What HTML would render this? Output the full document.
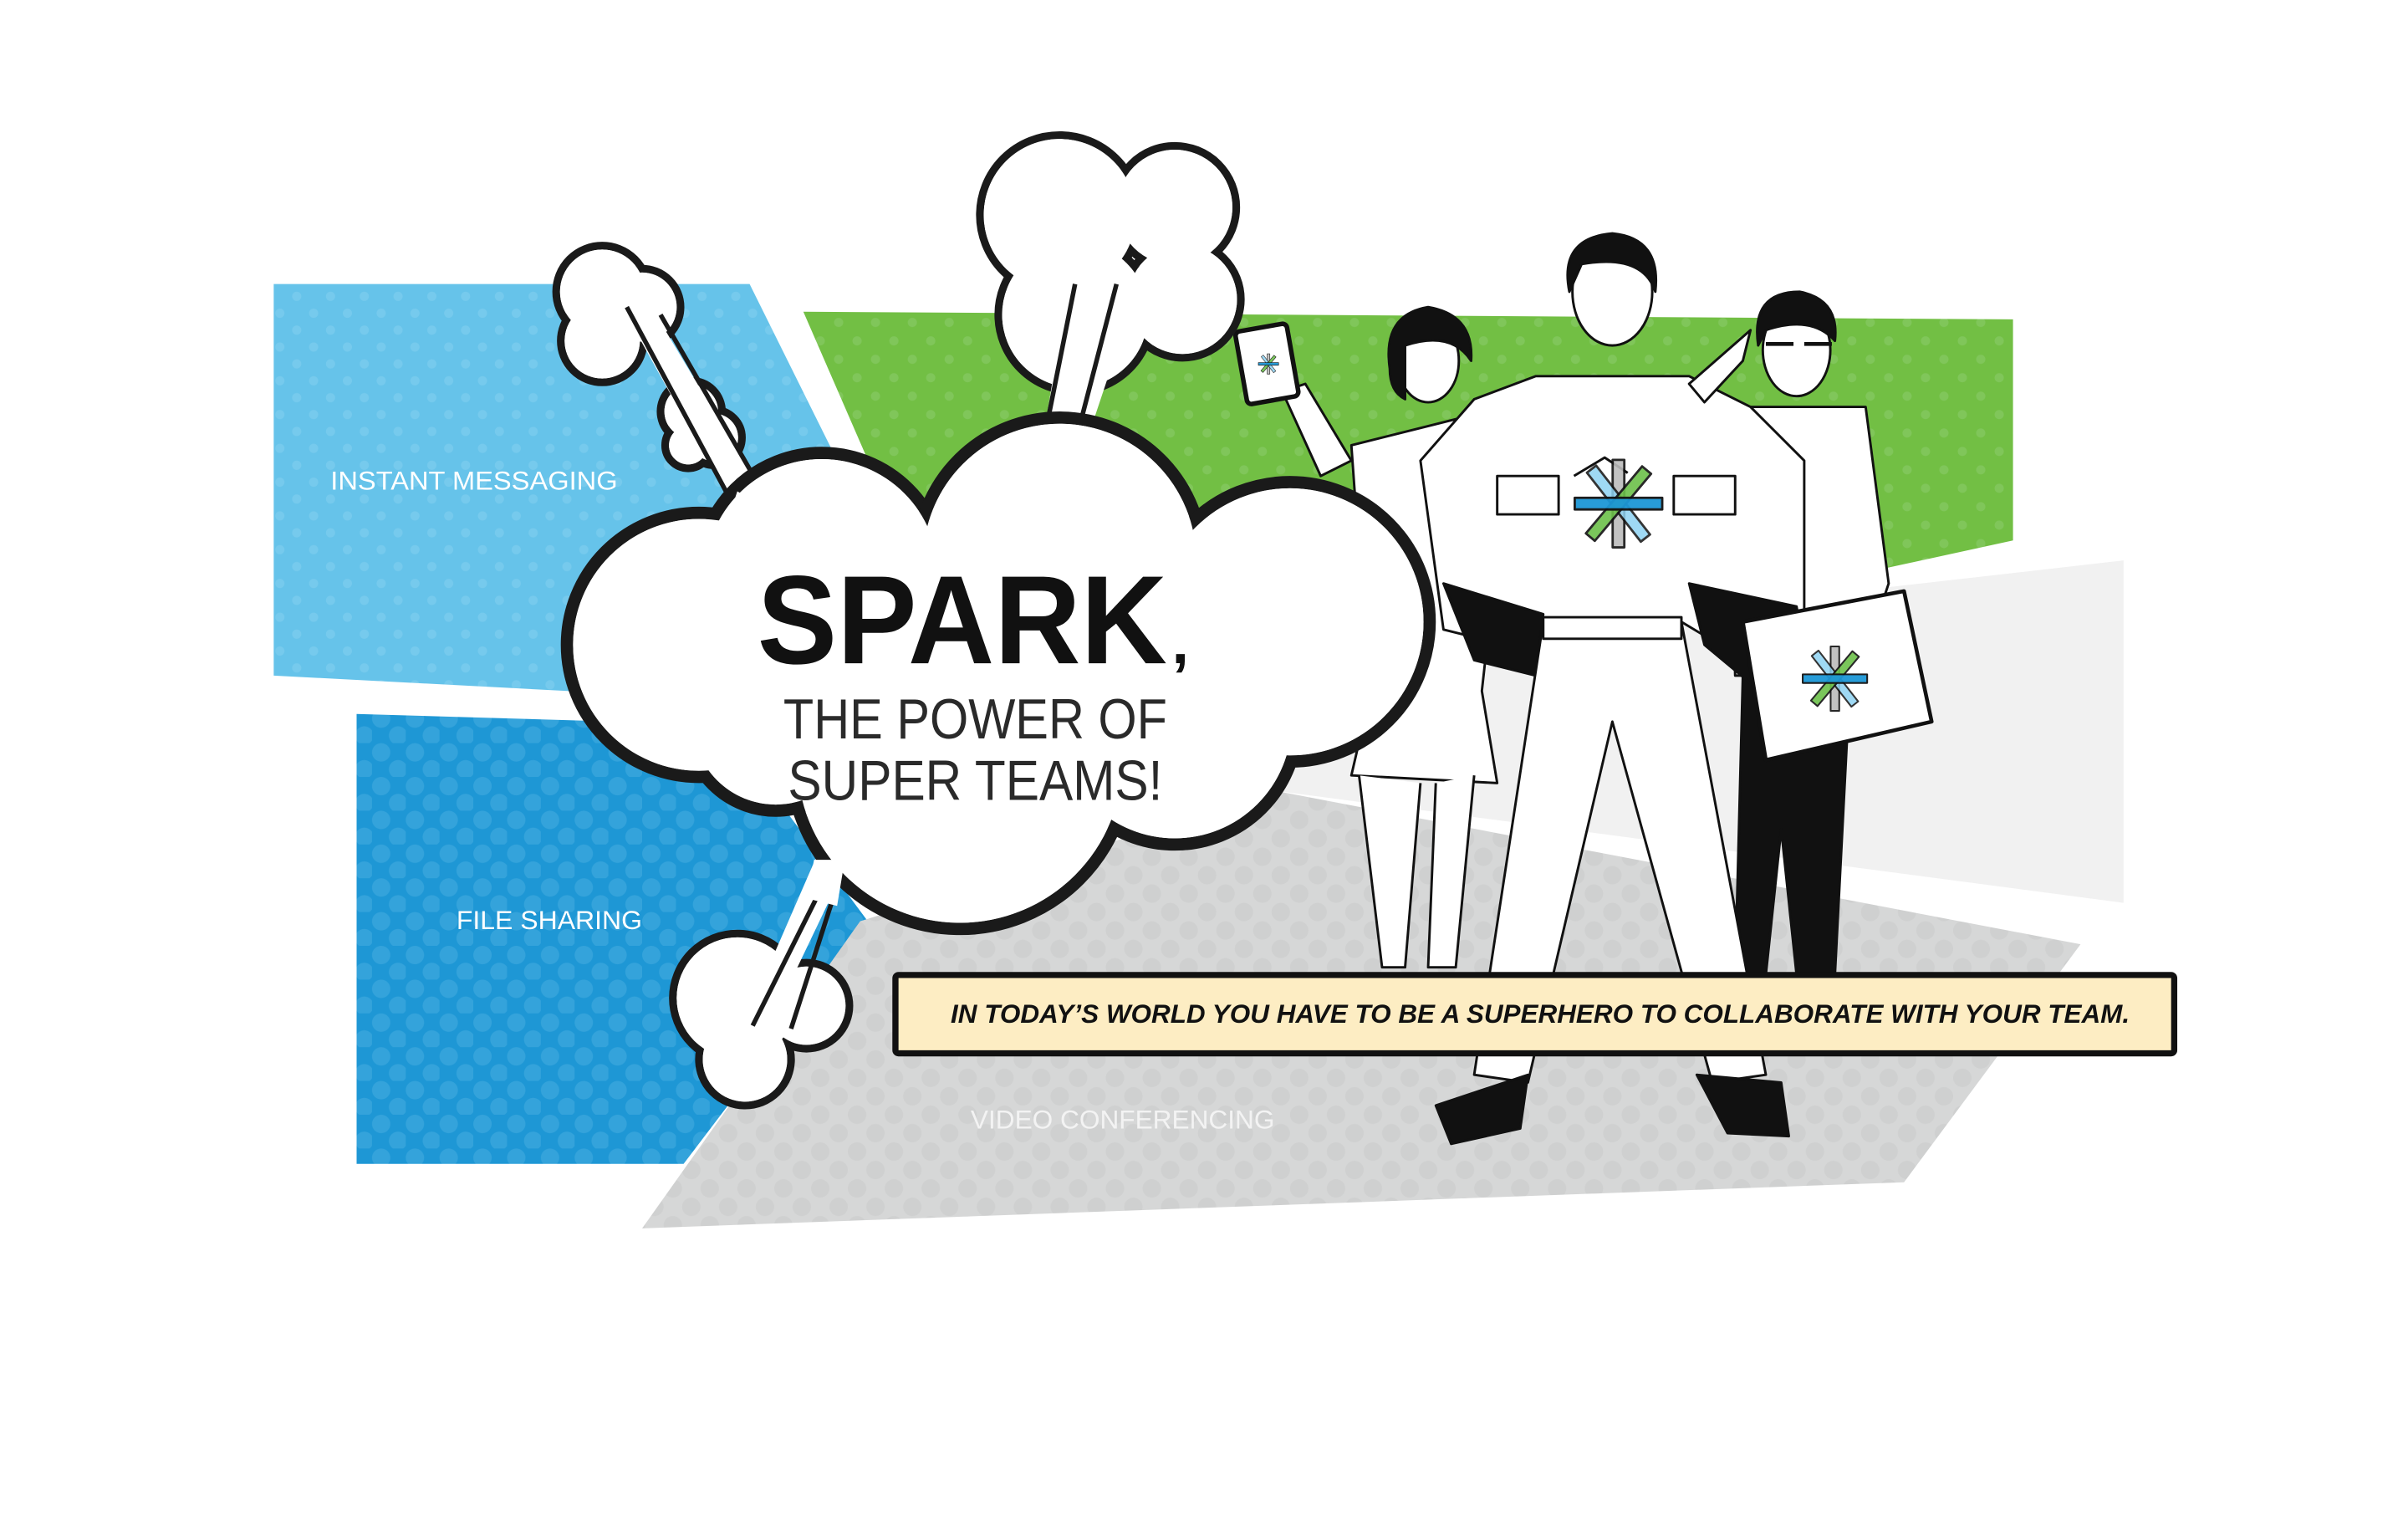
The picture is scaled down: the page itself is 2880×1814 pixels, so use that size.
<!DOCTYPE html>
<html><head><meta charset="utf-8"><style>
html,body{margin:0;padding:0;background:#fff;width:2880px;height:1814px;overflow:hidden}
svg{display:block}
text{font-family:"Liberation Sans",sans-serif}
</style></head><body>
<svg width="2880" height="1814" viewBox="0 0 1568 988" xmlns="http://www.w3.org/2000/svg">
<defs>
<pattern id="pLB" width="22" height="22" patternUnits="userSpaceOnUse"><rect width="22" height="22" fill="#66c3ea"/><circle cx="6" cy="6" r="3" fill="#76caed"/><circle cx="17" cy="17" r="3" fill="#76caed"/></pattern>
<pattern id="pDB" width="22" height="22" patternUnits="userSpaceOnUse"><rect width="22" height="22" fill="#1e97d5"/><circle cx="6" cy="6" r="6" fill="#34a3db"/><circle cx="17" cy="17" r="6" fill="#34a3db"/></pattern>
<pattern id="pG" width="24" height="24" patternUnits="userSpaceOnUse"><rect width="24" height="24" fill="#72bf44"/><circle cx="6" cy="6" r="3" fill="#80c65a"/><circle cx="18" cy="18" r="3" fill="#80c65a"/></pattern>
<pattern id="pGr" width="24" height="24" patternUnits="userSpaceOnUse"><rect width="24" height="24" fill="#d6d7d7"/><circle cx="6" cy="6" r="6" fill="#cfd0d0"/><circle cx="18" cy="18" r="6" fill="#cfd0d0"/></pattern>
<g id="logo">
<rect x="-4" y="-30" width="8" height="60" fill="#bcbcbc" opacity=".9"/>
<rect x="-4" y="-30" width="8" height="60" fill="#8fd3f3" transform="rotate(-38)" opacity=".85"/>
<rect x="-4" y="-30" width="8" height="60" fill="#6cc04a" transform="rotate(40)" opacity=".9"/>
<rect x="-30" y="-4" width="60" height="8" fill="#1d97d6" opacity=".95"/>
</g>
</defs>

<polygon points="178,185 488,185 565,340 560,460 178,440" fill="url(#pLB)"/>
<polygon points="232,465 470,472 565,600 445,758 232,758" fill="url(#pDB)"/>
<polygon points="523,203 1311,208 1311,352 1090,400 600,380" fill="url(#pG)"/>
<polygon points="900,420 1383,365 1383,588 830,515" fill="#f1f1f1"/>
<polygon points="830,515 1355,615 1240,770 418,800 560,600" fill="url(#pGr)"/>

<text x="215" y="319" fill="#fff" font-size="17" textLength="187" lengthAdjust="spacingAndGlyphs">INSTANT MESSAGING</text>
<text x="297" y="605" fill="#fff" font-size="17" textLength="121" lengthAdjust="spacingAndGlyphs">FILE SHARING</text>
<text x="632" y="735" fill="#f3f3f3" font-size="17" textLength="198" lengthAdjust="spacingAndGlyphs">VIDEO CONFERENCING</text>

<g stroke="#111" stroke-width="1.6" stroke-linejoin="round">
<path d="M835,255 L860,310 L880,300 L850,250 Z" fill="#fff"/>
<rect x="808" y="213" width="34" height="48" rx="3" fill="#fff" stroke-width="3" transform="rotate(-10 825 237)"/>
<use href="#logo" transform="translate(826,237) scale(.22)"/>
<path d="M880,290 L960,270 L975,360 L965,450 L975,510 L880,505 L895,440 L885,360 Z" fill="#fff"/>
<path d="M885,505 L900,630 L915,630 L925,510 M935,510 L930,630 L948,630 L960,505" fill="#fff"/>
<ellipse cx="930" cy="235" rx="20" ry="27" fill="#fff"/>
<path d="M905,240 Q900,205 930,200 Q960,205 958,235 Q945,215 915,225 L915,260 Q905,255 905,240 Z" fill="#111"/>
<path d="M1125,265 L1215,265 L1230,380 L1210,440 L1130,440 Z" fill="#fff"/>
<path d="M1135,440 L1205,440 L1195,635 L1170,635 L1160,540 L1150,635 L1130,635 Z" fill="#111"/>
<ellipse cx="1170" cy="228" rx="22" ry="30" fill="#fff"/>
<path d="M1145,225 Q1140,190 1172,190 Q1198,195 1195,222 Q1180,205 1150,215 Z" fill="#111"/>
<path d="M1150,224 h18 M1175,224 h18" stroke-width="2.5"/>
<path d="M960,260 L1000,245 L1100,245 L1140,265 L1175,300 L1175,440 L1120,420 L1095,405 L1005,405 L980,420 L940,410 L925,300 Z" fill="#fff"/>
<path d="M940,380 L1005,400 L1000,440 L960,430 Z" fill="#111"/>
<path d="M1100,380 L1170,395 L1178,440 L1140,445 L1110,420 Z" fill="#111"/>
<path d="M1100,250 L1140,215 L1135,235 L1110,262 Z" fill="#fff"/>
<path d="M1005,405 L1095,405 L1150,700 L1115,705 L1050,470 L995,705 L960,700 Z" fill="#fff"/>
<rect x="1005" y="402" width="90" height="14" fill="#fff"/>
<path d="M935,720 L995,700 L990,735 L945,745 Z M1105,700 L1160,705 L1165,740 L1125,738 Z" fill="#111"/>
<ellipse cx="1050" cy="190" rx="26" ry="35" fill="#fff"/>
<path d="M1022,190 Q1015,155 1050,152 Q1082,155 1078,190 Q1070,165 1030,172 Z" fill="#111"/>
<path d="M1025,310 L1045,298 L1060,308 M975,310 h40 v25 h-40 Z M1090,310 h40 v25 h-40 Z" fill="#fff"/>
<use href="#logo" transform="translate(1054,328) scale(.95)"/>
<path d="M1135,405 L1240,385 L1258,470 L1150,495 Z" fill="#fff" stroke-width="2.5"/>
<use href="#logo" transform="translate(1195,442) scale(.7)"/>
</g>

<g stroke="#1a1a1a" stroke-width="5" fill="#fff">
<circle cx="392" cy="190" r="30"/><circle cx="418" cy="200" r="25"/><circle cx="392" cy="222" r="27"/>
<circle cx="450" cy="268" r="20"/><circle cx="465" cy="285" r="18"/><circle cx="448" cy="290" r="15"/>
<circle cx="690" cy="140" r="52"/><circle cx="765" cy="135" r="40"/><circle cx="770" cy="195" r="38"/><circle cx="700" cy="205" r="50"/>
<circle cx="480" cy="650" r="42"/><circle cx="525" cy="655" r="28"/><circle cx="485" cy="690" r="30"/>
</g>
<g fill="#fff">
<circle cx="392" cy="190" r="27.5"/><circle cx="418" cy="200" r="22.5"/><circle cx="392" cy="222" r="24.5"/>
<circle cx="450" cy="268" r="17.5"/><circle cx="465" cy="285" r="15.5"/><circle cx="448" cy="290" r="12.5"/>
<circle cx="690" cy="140" r="49.5"/><circle cx="765" cy="135" r="37.5"/><circle cx="770" cy="195" r="35.5"/><circle cx="700" cy="205" r="47.5"/>
<circle cx="480" cy="650" r="39.5"/><circle cx="525" cy="655" r="25.5"/><circle cx="485" cy="690" r="27.5"/>
<polygon points="405,200 430,210 505,335 480,335"/>
<polygon points="690,220 730,220 700,310 675,310"/>
<polygon points="535,550 555,555 500,670 485,665"/>
</g>
<g stroke="#1a1a1a" stroke-width="3" fill="none">
<path d="M408,200 L478,330 M430,205 L505,335"/>
<path d="M700,185 L675,310 M727,185 L695,308"/>
<path d="M548,552 L490,668 M552,555 L515,670"/>
</g>

<g stroke="#1a1a1a" stroke-width="8" fill="#fff">
<circle cx="455" cy="420" r="86"/><circle cx="535" cy="375" r="80"/><circle cx="690" cy="365" r="93"/>
<circle cx="840" cy="405" r="91"/><circle cx="625" cy="495" r="110"/><circle cx="765" cy="470" r="80"/><circle cx="505" cy="470" r="58"/>
</g>
<g fill="#fff">
<circle cx="455" cy="420" r="82"/><circle cx="535" cy="375" r="76"/><circle cx="690" cy="365" r="89"/>
<circle cx="840" cy="405" r="87"/><circle cx="625" cy="495" r="106"/><circle cx="765" cy="470" r="76"/><circle cx="505" cy="470" r="54"/>
<polygon points="682,300 700,300 690,330 676,330"/>
<polygon points="480,320 505,335 500,345 476,332"/>
<polygon points="530,560 550,560 545,590 525,585"/>
</g>

<text x="493" y="432" fill="#111" font-size="82" font-weight="bold" textLength="267" lengthAdjust="spacingAndGlyphs">SPARK</text>
<text x="763" y="432" fill="#111" font-size="40" font-weight="bold">,</text>
<text x="510" y="481" fill="#2a2a2a" font-size="37" textLength="250" lengthAdjust="spacingAndGlyphs">THE POWER OF</text>
<text x="513" y="521" fill="#2a2a2a" font-size="37" textLength="244" lengthAdjust="spacingAndGlyphs">SUPER TEAMS!</text>

<rect x="583" y="635" width="833" height="51" rx="2" fill="#fdedc3" stroke="#111" stroke-width="4"/>
<text x="619" y="666" fill="#111" font-size="17" font-style="italic" font-weight="bold" textLength="768" lengthAdjust="spacingAndGlyphs">IN TODAY’S WORLD YOU HAVE TO BE A SUPERHERO TO COLLABORATE WITH YOUR TEAM.</text>
</svg>
</body></html>
